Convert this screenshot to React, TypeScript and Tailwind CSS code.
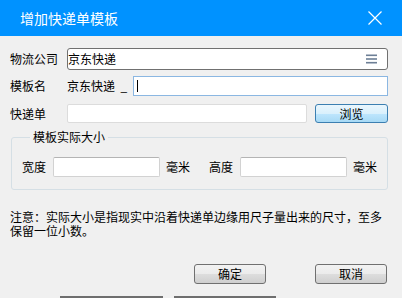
import React from "react";

const btn =
  "h-[20px] w-[72px] rounded-[3px] border border-[#707070] bg-[linear-gradient(#f2f2f2_0%,#ebebeb_50%,#dddddd_51%,#cfcfcf_100%)] text-[12px] leading-[18px] text-black";

export default function App() {
  return (
    <div
      className="w-[402px] h-[298px] bg-[#f0f0f0] flex flex-col overflow-hidden text-[12px] text-black"
      style={{ fontFamily: '"Noto Sans CJK SC", "Noto Sans", sans-serif' }}
    >
      {/* title bar */}
      <div className="h-[36px] shrink-0 bg-[#0092ff] flex items-center justify-between pl-[20px] pr-[20px]">
        <span className="text-[14px] text-white leading-[16px]">增加快递单模板</span>
        <svg width="14" height="14" viewBox="0 0 14 14" className="mr-[0px]">
          <path d="M0.5 0.5 L13.5 13.5 M13.5 0.5 L0.5 13.5" stroke="#ffffff" strokeWidth="1.2" />
        </svg>
      </div>

      {/* form rows */}
      <div className="flex flex-col pl-[10px] pr-[14px] pt-[12px]">
        <div className="flex items-center h-[22px]">
          <span className="w-[57px] shrink-0 leading-[14px]">物流公司</span>
          <div className="flex-1 h-[22px] bg-white border border-[#707070] rounded-[3px] flex items-center justify-between pl-[0px] pr-[10px]">
            <span className="leading-[14px]">京东快递</span>
            <svg width="11" height="10" viewBox="0 0 11 10">
              <rect x="0" y="0.5" width="11" height="1.6" fill="#6d7f96" />
              <rect x="0" y="4.2" width="11" height="1.6" fill="#6d7f96" />
              <rect x="0" y="7.9" width="11" height="1.6" fill="#6d7f96" />
            </svg>
          </div>
        </div>

        <div className="flex items-center h-[20px] mt-[6px]">
          <span className="w-[57px] shrink-0 leading-[14px]">模板名</span>
          <span className="w-[66px] shrink-0 leading-[14px] whitespace-pre">京东快递  _</span>
          <div className="flex-1 h-[20px] bg-white border border-[#8bb7e2] flex items-center pl-[3px]">
            <div className="w-[1px] h-[12px] bg-black" />
          </div>
        </div>

        <div className="flex items-center h-[19px] mt-[8px]">
          <span className="w-[57px] shrink-0 leading-[14px]">快递单</span>
          <div className="w-[240px] h-[19px] bg-white border border-[#dcdcdc] rounded-[2px]" />
          <button className="ml-[8px] h-[19px] w-[73px] rounded-[3px] border border-[#3c7fb1] bg-[linear-gradient(#eaf6fd_0%,#d9f0fc_50%,#bee6fd_51%,#a7d9f5_100%)] text-[12px] leading-[17px]">
            浏览
          </button>
        </div>
      </div>

      {/* group box */}
      <fieldset className="mx-[11px] mt-[7px] w-[377px] border border-[#d5dfe5] rounded-[3px] pl-[10px] pt-[13px] pb-[12px]">
        <legend className="ml-[8px] px-[3px] leading-[14px]">模板实际大小</legend>
        <div className="flex items-center h-[20px]">
          <span className="leading-[14px]">宽度</span>
          <div className="ml-[7px] w-[107px] h-[20px] bg-white border border-[#d2d2d2] border-t-[#b4b4b4] rounded-[2px]" />
          <span className="ml-[6px] leading-[14px]">毫米</span>
          <span className="ml-[19px] leading-[14px]">高度</span>
          <div className="ml-[7px] w-[107px] h-[20px] bg-white border border-[#d2d2d2] border-t-[#b4b4b4] rounded-[2px]" />
          <span className="ml-[6px] leading-[14px]">毫米</span>
        </div>
      </fieldset>

      {/* note */}
      <p className="mt-[20px] pl-[10px] leading-[14px] whitespace-nowrap">
        注意：实际大小是指现实中沿着快递单边缘用尺子量出来的尺寸，至多
        <br />
        保留一位小数。
      </p>

      {/* buttons */}
      <div className="flex justify-end gap-[49px] pr-[15px] mt-[26px]">
        <button className={btn}>确定</button>
        <button className={btn}>取消</button>
      </div>

      {/* edge of what lies below */}
      <div className="flex mt-[12px] pl-[60px] gap-[11px]">
        <div className="w-[103px] h-[2px] bg-[#6e6e6e]" />
        <div className="w-[102px] h-[2px] bg-[#6e6e6e]" />
      </div>
    </div>
  );
}
